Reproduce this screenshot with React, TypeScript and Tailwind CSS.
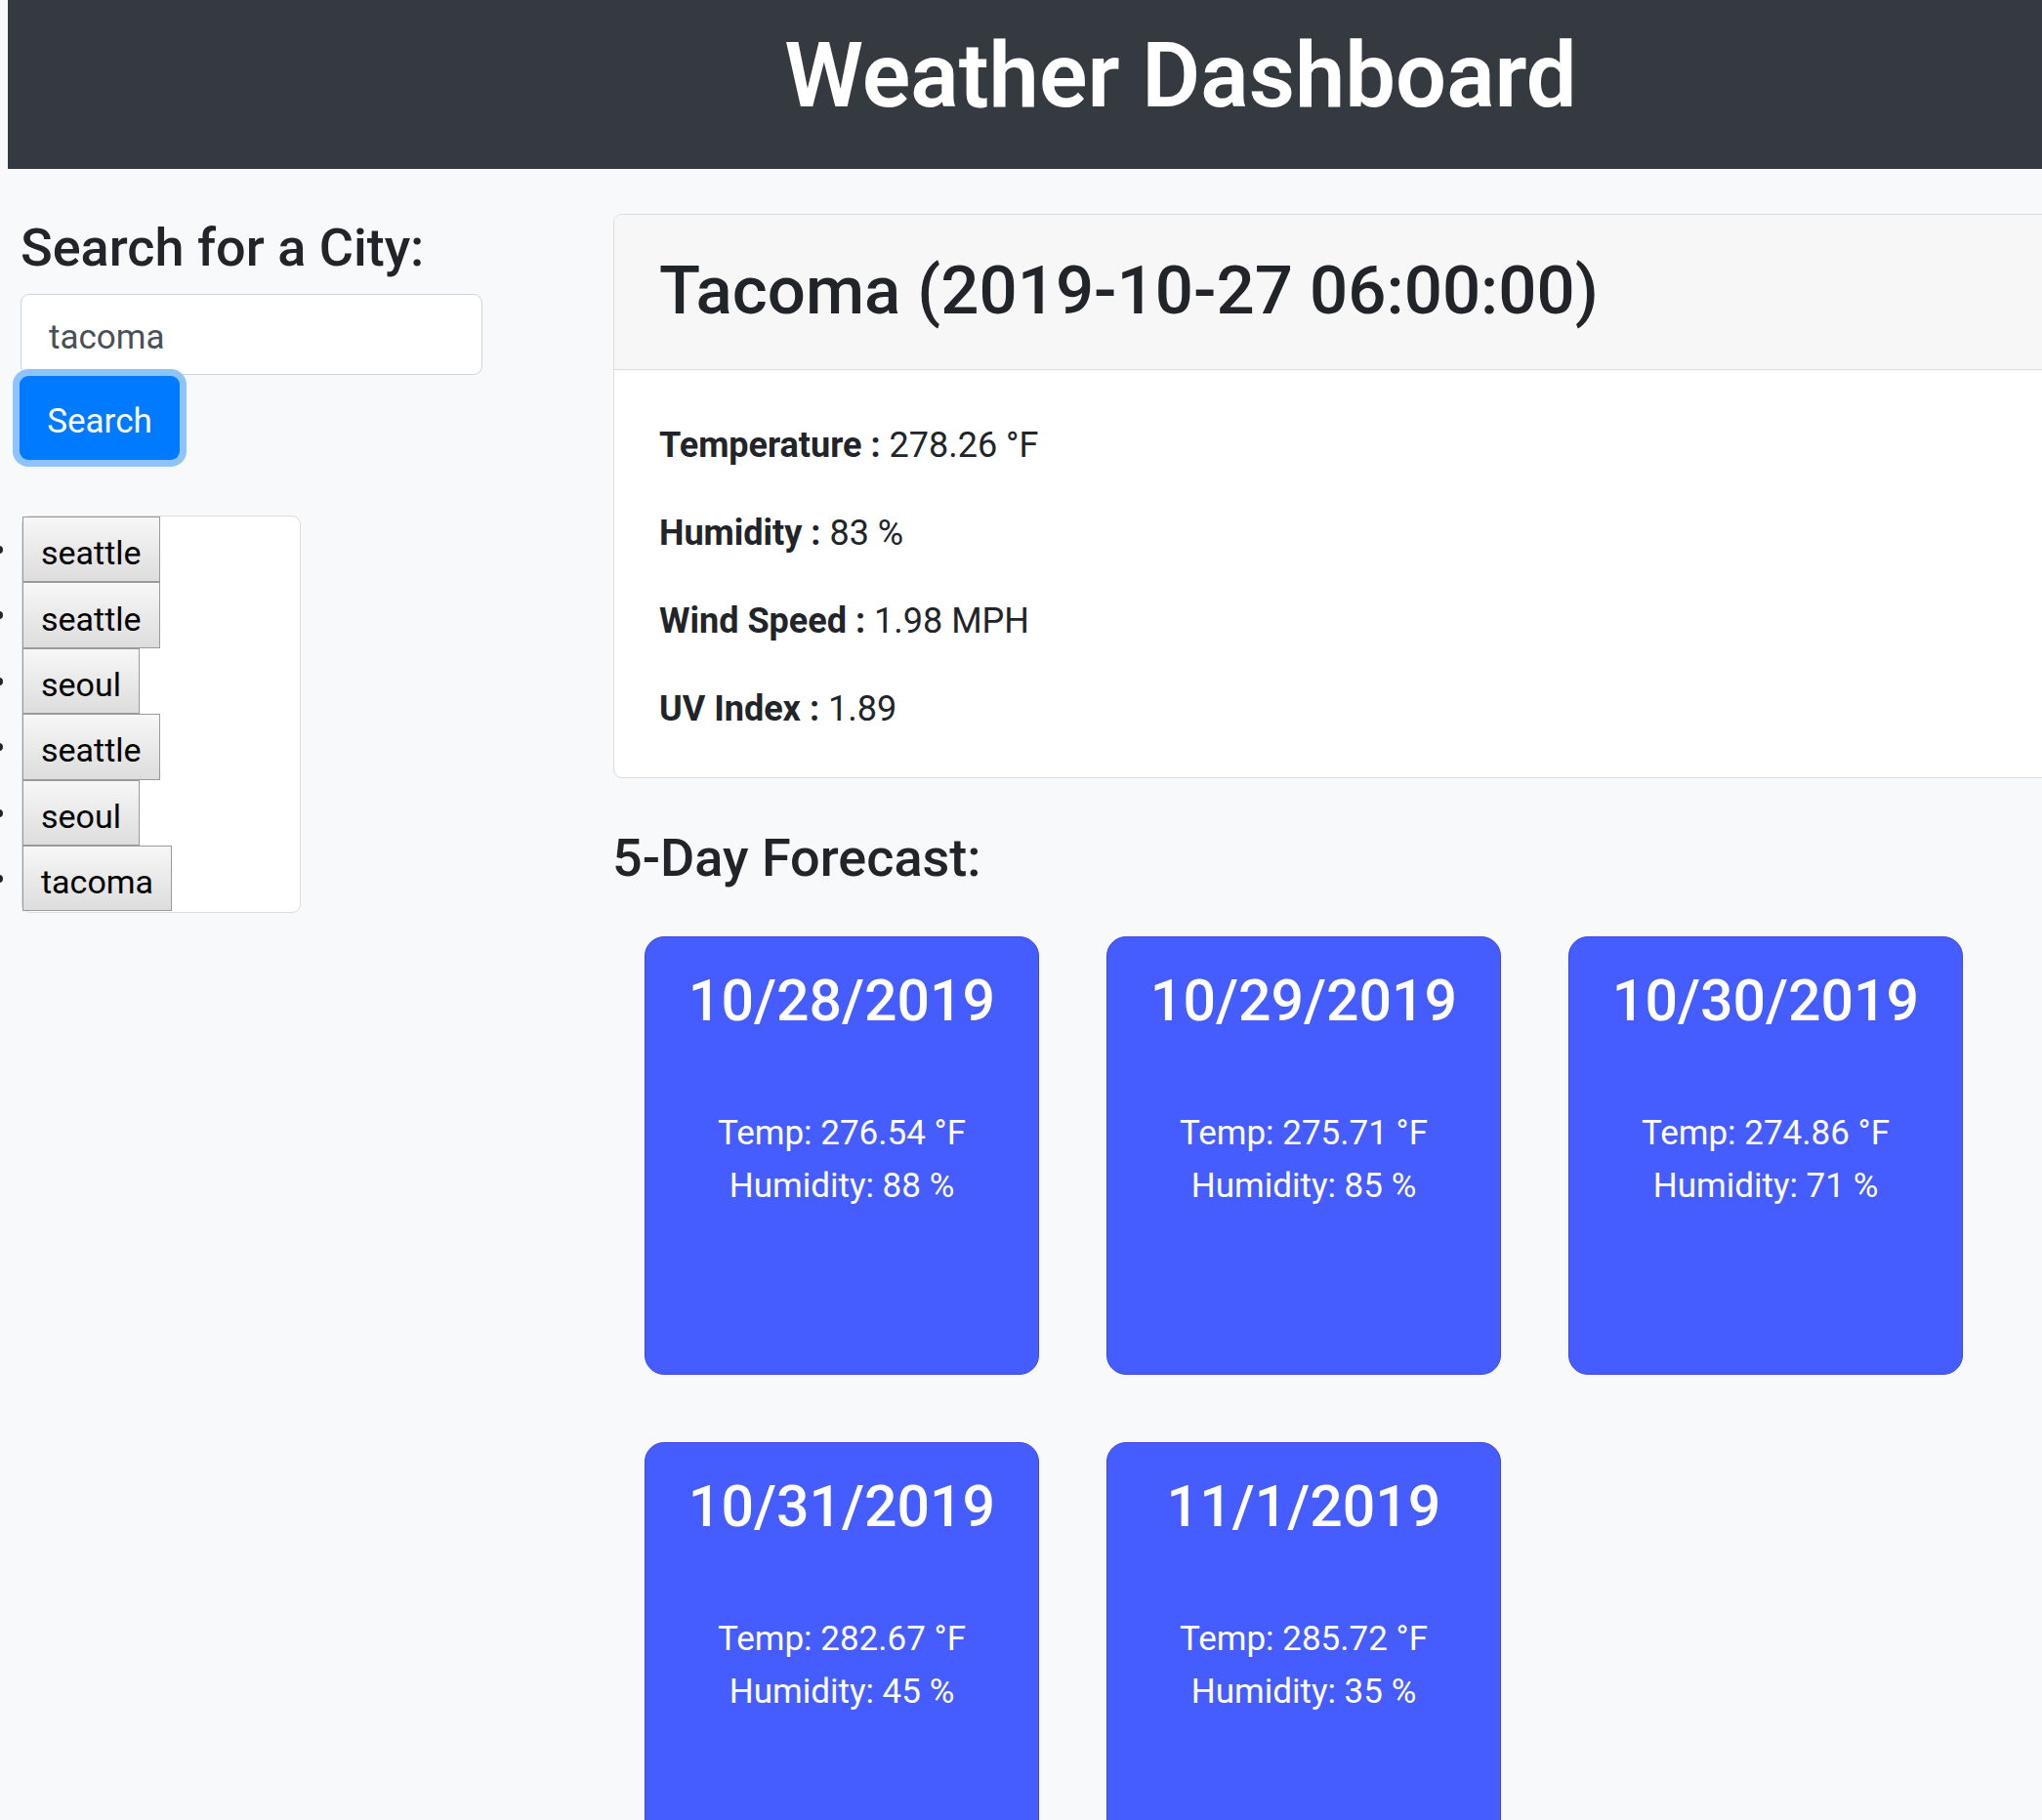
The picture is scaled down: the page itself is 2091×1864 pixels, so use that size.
import React from "react";

type Forecast = {
  date: string;
  temp: string;
  humidity: string;
};

const history = ["seattle", "seattle", "seoul", "seattle", "seoul", "tacoma"];

const forecast: Forecast[] = [
  { date: "10/28/2019", temp: "276.54", humidity: "88" },
  { date: "10/29/2019", temp: "275.71", humidity: "85" },
  { date: "10/30/2019", temp: "274.86", humidity: "71" },
  { date: "10/31/2019", temp: "282.67", humidity: "45" },
  { date: "11/1/2019", temp: "285.72", humidity: "35" },
];

const CurrentWeather: React.FC = () => {
  return (
    <div className="w-[1770px] rounded-[9px] border border-[#dcdcdc] bg-white overflow-hidden">
      <div className="h-[159px] bg-[#f7f7f7] border-b border-[#dcdcdc] px-[46px] pt-[36px]">
        <h2 className="text-[69px] leading-[83px] font-medium text-[#212529]">
          Tacoma (2019-10-27 06:00:00)
        </h2>
      </div>
      <div className="px-[46px] pt-[50px] pb-[43px] text-[36px] leading-[54px] text-[#212529]">
        <p className="mb-[36px]">
          <span className="font-bold">Temperature :</span> 278.26 °F
        </p>
        <p className="mb-[36px]">
          <span className="font-bold">Humidity :</span> 83 %
        </p>
        <p className="mb-[36px]">
          <span className="font-bold">Wind Speed :</span> 1.98 MPH
        </p>
        <p>
          <span className="font-bold">UV Index :</span> 1.89
        </p>
      </div>
    </div>
  );
};

const ForecastCard: React.FC<{ day: Forecast }> = ({ day }) => {
  return (
    <div className="h-[449px] rounded-[20px] border border-[#3f45ee] bg-[#455dff] text-white text-center pt-[29px]">
      <h3 className="text-[59px] leading-[71px] font-medium">{day.date}</h3>
      <div className="mt-[74px] text-[35px] leading-[54px]">
        <p>Temp: {day.temp} °F</p>
        <p>Humidity: {day.humidity} %</p>
      </div>
    </div>
  );
};

export default function App() {
  return (
    <div className="w-full min-h-[1864px] overflow-hidden bg-[#f8f9fa] [font-family:Roboto,sans-serif]">
      {/* Header */}
      <header className="ml-[8px] w-[2402px] h-[173px] bg-[#343a40] pt-[32px]">
        <h1 className="text-center text-white text-[92px] leading-[91px] font-semibold">
          Weather Dashboard
        </h1>
      </header>

      <div className="flex">
        {/* Search column */}
        <div className="w-[628px] shrink-0 pl-[21px] pt-[48px]">
          <h4 className="text-[54px] leading-[65px] font-medium text-[#212529] mb-[15px]">
            Search for a City:
          </h4>
          <input
            readOnly
            value="tacoma"
            className="block w-[473px] h-[83px] rounded-[9px] border border-[#ced4da] bg-white px-[28px] pt-[5px] text-[35px] text-[#495057] outline-none [font-family:Roboto,sans-serif]"
          />
          <button className="block -ml-px mt-px h-[86px] w-[164px] pt-[8px] rounded-[9px] bg-[#007bff] text-white text-[35px] ring-[7px] ring-[#8fc3fd]">
            Search
          </button>

          <ul className="mt-[57px] ml-px w-[286px] h-[407px] rounded-[9px] border border-[#dcdcdc] bg-white">
            {history.map((city, i) => (
              <li key={i} className="relative h-[67.4px]">
                <span className="absolute left-[-28px] top-[30px] h-[8px] w-[8px] rounded-full bg-[#212529]" />
                <button className="h-full px-[18px] pt-[8px] border border-[#9a9a9a] bg-linear-to-b from-[#f7f7f7] to-[#dddddd] text-[34px] text-black">
                  {city}
                </button>
              </li>
            ))}
          </ul>
        </div>

        {/* Main column */}
        <div className="pt-[46px]">
          <CurrentWeather />
          <h4 className="mt-[49px] -ml-px text-[54px] leading-[65px] font-medium text-[#212529]">
            5-Day Forecast:
          </h4>
          <div className="mt-[48px] ml-[32px] grid grid-cols-[repeat(3,404px)] gap-[69px]">
            {forecast.map((day) => (
              <ForecastCard key={day.date} day={day} />
            ))}
          </div>
        </div>
      </div>
    </div>
  );
}
